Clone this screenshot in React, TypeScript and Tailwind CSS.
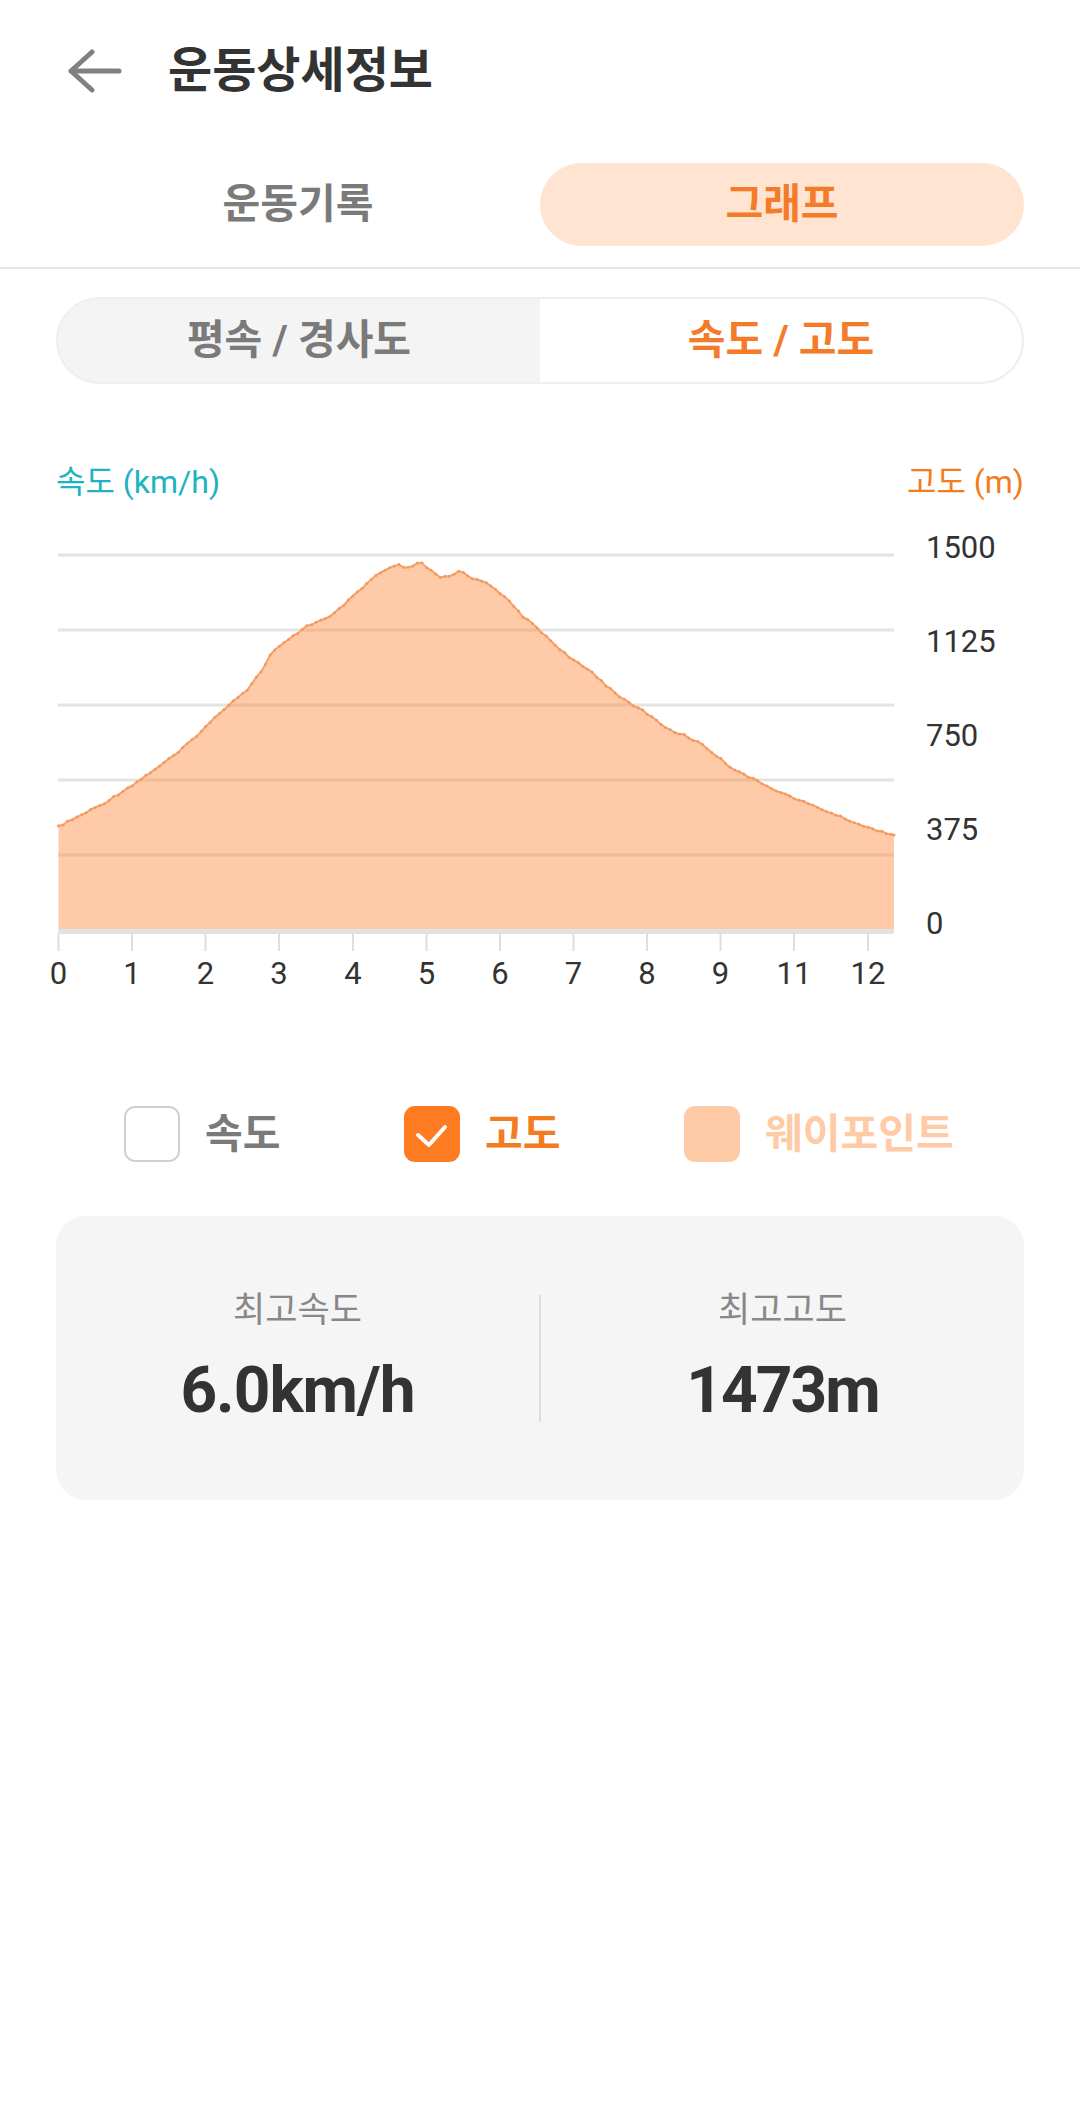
import React from "react";

const FONT = "Roboto, 'Noto Sans CJK KR', sans-serif";

// elevation profile, page coordinates (x, y)
const KEY: [number, number][] = [
  [58.5, 826.6], [103.3, 803.7], [137.7, 781.5], [179.1, 751.9], [206.6, 726.0],
  [227.3, 705.6], [247.9, 689.0], [261.7, 670.5], [272.0, 652.0], [282.4, 644.6],
  [306.5, 626.1], [330.6, 616.8], [351.2, 598.3], [375.3, 576.1], [385.7, 569.8],
  [399.4, 565.0], [406.3, 568.7], [420.1, 562.4], [430.4, 569.8], [439.4, 578.0],
  [451.1, 576.1], [460.1, 570.6], [475.2, 579.8], [485.5, 581.7], [495.9, 589.1],
  [509.6, 602.0], [523.4, 616.8], [537.2, 627.9], [551.0, 640.9], [571.6, 659.4],
  [592.3, 672.3], [606.1, 685.3], [626.7, 701.9], [643.9, 711.2], [671.5, 731.5],
  [681.8, 734.1], [702.5, 744.5], [730.0, 766.7], [757.6, 781.5], [785.1, 794.4],
  [798.9, 800.0], [826.4, 811.1], [854.0, 822.2], [867.8, 827.7], [881.5, 831.4],
  [894.0, 835.1],
];

function samples() {
  const pts: [number, number][] = [];
  let k = 0;
  let i = 0;
  for (let x = 58.5; x <= 894; x += 4.6, i++) {
    while (k < KEY.length - 2 && KEY[k + 1][0] < x) k++;
    const [x0, y0] = KEY[k];
    const [x1, y1] = KEY[k + 1];
    const t = Math.min(1, Math.max(0, (x - x0) / (x1 - x0)));
    const r = Math.sin(i * 12.9898) * 43758.5453;
    const noise = (r - Math.floor(r)) * 2 - 1;
    pts.push([x, y0 + (y1 - y0) * t + noise * 0.9]);
  }
  pts.push(KEY[KEY.length - 1]);
  return pts;
}

const GRID = [555, 630, 705, 780, 855];
// right axis labels are spread evenly between top line and baseline
const YLABELS: [string, number][] = [["1500", 558], ["1125", 652], ["750", 746], ["375", 840], ["0", 934]];
const TICKS = [58.5, 132, 205.5, 279, 353, 426.5, 500, 573.5, 647, 720.5, 794, 868];
const XLABELS = ["0", "1", "2", "3", "4", "5", "6", "7", "8", "9", "11", "12"];

function Chart() {
  const pts = samples();
  const line = pts.map(([x, y], i) => `${i ? "L" : "M"}${x.toFixed(1)} ${y.toFixed(1)}`).join(" ");
  const area = `${line} L894 930 L58.5 930 Z`;
  return (
    <svg width="1080" height="470" viewBox="0 530 1080 470" className="block">
      {GRID.map((y) => (
        <rect key={y} x="58" y={y - 1.5} width="836" height="3" fill="#e3e3e3" />
      ))}
      <path d={area} fill="#ff8a3d" fillOpacity="0.45" />
      <path d={line} fill="none" stroke="#f6a26c" strokeWidth="2" strokeLinejoin="round" />
      {pts.map(([x, y], i) => (
        <circle key={i} cx={x} cy={y} r="1.5" fill="#f39a60" />
      ))}
      <rect x="58" y="929" width="836" height="5" fill="#e2e2e2" />
      {TICKS.map((x) => (
        <rect key={x} x={x - 1} y="934" width="2" height="17" fill="#dedede" />
      ))}
      {YLABELS.map(([t, y]) => (
        <text key={t} x="926" y={y} fontSize="31" fill="#333" fontFamily={FONT}>
          {t}
        </text>
      ))}
      {TICKS.map((x, i) => (
        <text key={x} x={x} y="984" fontSize="31" fill="#333" fontFamily={FONT} textAnchor="middle">
          {XLABELS[i]}
        </text>
      ))}
    </svg>
  );
}

function Check({ state }: { state: "off" | "on" | "muted" }) {
  if (state === "on")
    return (
      <div className="w-[56px] h-[56px] rounded-[11px] bg-[#ff7b22] flex items-center justify-center">
        <svg width="56" height="56" viewBox="0 0 56 56">
          <path d="M14 29 L25 39 L41 21" fill="none" stroke="#fff" strokeWidth="4" strokeLinecap="round" strokeLinejoin="round" />
        </svg>
      </div>
    );
  if (state === "muted") return <div className="w-[56px] h-[56px] rounded-[11px] bg-[#ffcba6]" />;
  return <div className="w-[56px] h-[56px] rounded-[11px] border-2 border-[#d0d0d0] bg-white" />;
}

export default function App() {
  return (
    <div className="w-[1080px] min-h-[2106px] bg-white" style={{ fontFamily: FONT }}>
      {/* header */}
      <header className="h-[142px] flex items-center pl-[68px]">
        <svg width="54" height="44" viewBox="0 0 54 44">
          <path d="M24 3 L3 22 L24 41 M3 22 H51" fill="none" stroke="#808080" strokeWidth="5" strokeLinecap="round" strokeLinejoin="round" />
        </svg>
        <h1 className="ml-[46px] text-[48px] leading-none font-bold text-[#333]">운동상세정보</h1>
      </header>

      {/* tabs */}
      <div className="px-[56px] pt-[21px] pb-[21px] border-b-2 border-[#e4e4e4] flex">
        <div className="flex-1 h-[83px] flex items-center justify-center text-[41px] font-bold text-[#7a7a7a]">운동기록</div>
        <div className="flex-1 h-[83px] rounded-full bg-[#ffe4d2] flex items-center justify-center text-[41px] font-bold text-[#f47b2a]">
          그래프
        </div>
      </div>

      {/* segment */}
      <div className="mx-[56px] mt-[28px] h-[87px] rounded-full border-2 border-[#efefef] bg-[#f4f4f4] overflow-hidden flex">
        <div className="flex-1 flex items-center justify-center text-[41px] font-bold text-[#7a7a7a]">평속 / 경사도</div>
        <div className="flex-1 bg-white rounded-r-full flex items-center justify-center text-[41px] font-bold text-[#f47b2a]">
          속도 / 고도
        </div>
      </div>

      {/* chart */}
      <div className="mt-[78px] px-[56px] h-[40px] flex items-center justify-between text-[32px] leading-[40px]">
        <span className="text-[#1db3c1]">속도 (km/h)</span>
        <span className="text-[#f47b20]">고도 (m)</span>
      </div>
      <div className="mt-[28px]">
        <Chart />
      </div>

      {/* legend */}
      <div className="mt-[106px] pl-[124px] flex items-center text-[41px] font-bold leading-none">
        <div className="w-[280px] flex items-center gap-[25px]">
          <Check state="off" />
          <span className="text-[#7a7a7a]">속도</span>
        </div>
        <div className="w-[280px] flex items-center gap-[25px]">
          <Check state="on" />
          <span className="text-[#f47b20]">고도</span>
        </div>
        <div className="flex items-center gap-[25px]">
          <Check state="muted" />
          <span className="text-[#ffcba6]">웨이포인트</span>
        </div>
      </div>

      {/* stats */}
      <div className="mx-[56px] mt-[54px] h-[284px] rounded-[30px] bg-[#f5f5f5] flex items-center">
        <div className="flex-1 flex flex-col items-center">
          <div className="h-[40px] leading-[40px] text-[35px] text-[#888]">최고속도</div>
          <div className="mt-[25px] h-[70px] leading-[70px] text-[64px] font-bold tracking-[-1px] text-[#333]">6.0km/h</div>
        </div>
        <div className="w-[2px] h-[127px] bg-[#dddddd]" />
        <div className="flex-1 flex flex-col items-center">
          <div className="h-[40px] leading-[40px] text-[35px] text-[#888]">최고고도</div>
          <div className="mt-[25px] h-[70px] leading-[70px] text-[64px] font-bold tracking-[-2px] text-[#333]">1473m</div>
        </div>
      </div>
    </div>
  );
}
